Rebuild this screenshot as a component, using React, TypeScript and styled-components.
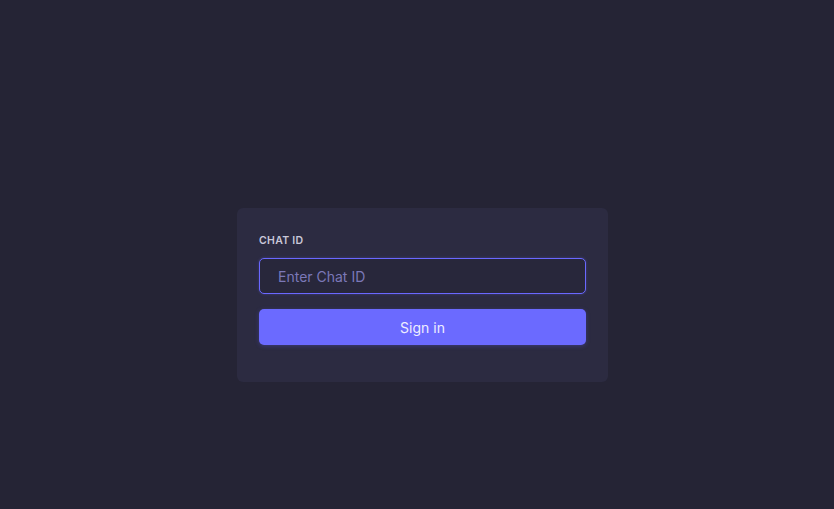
import * as React from 'react';
import styled, { createGlobalStyle } from 'styled-components';

const GlobalStyle = createGlobalStyle`
  html, body {
    margin: 0;
    padding: 0;
    background: #252435;
  }
  * { box-sizing: border-box; }
`;

export const Wrapper = styled.div`
  display: flex;
  align-items: center;
  justify-content: center;
  height: 100vh;
  width: 100vw;
  background: #252435;
  font-family: Inter, "Liberation Sans", sans-serif;
  padding-top: 81px;
  padding-left: 11px;
`;

export const Card = styled.form`
  width: 371px;
  background: #2c2b41;
  border-radius: 6px;
  padding: 27px 22px 37px;
  display: flex;
  flex-direction: column;
`;

export const Label = styled.label`
  color: #c9c8d9;
  font-size: 10.5px;
  font-weight: 600;
  letter-spacing: 0.3px;
  line-height: 12px;
  margin-bottom: 11px;
`;

export const Input = styled.input`
  height: 36px;
  width: 100%;
  background: #28273b;
  border: 1px solid #6a68ff;
  border-radius: 5px;
  color: #e0e0f0;
  font-family: Inter, "Liberation Sans", sans-serif;
  font-size: 14px;
  padding: 0 18px;
  outline: none;
  box-shadow: 0 0 3px rgba(106, 104, 255, 0.35);

  &::placeholder {
    color: #7b78b8;
  }
`;

export const Button = styled.button<{ $primary?: boolean }>`
  height: 36px;
  width: 100%;
  margin-top: 15px;
  border: none;
  border-radius: 5px;
  background: ${(p) => (p.$primary ? '#6b6aff' : '#3a3955')};
  color: #eeeeff;
  font-family: Inter, "Liberation Sans", sans-serif;
  font-size: 14px;
  cursor: pointer;
  box-shadow: 0 1px 4px rgba(90, 88, 230, 0.35);
`;

export default function App() {
  const [chatId, setChatId] = React.useState('');

  return (
    <Wrapper>
      <GlobalStyle />
      <Card onSubmit={(e) => e.preventDefault()}>
        <Label htmlFor="chat-id">CHAT ID</Label>
        <Input
          id="chat-id"
          placeholder="Enter Chat ID"
          value={chatId}
          onChange={(e) => setChatId(e.currentTarget.value)}
        />
        <Button $primary type="submit">Sign in</Button>
      </Card>
    </Wrapper>
  );
}
